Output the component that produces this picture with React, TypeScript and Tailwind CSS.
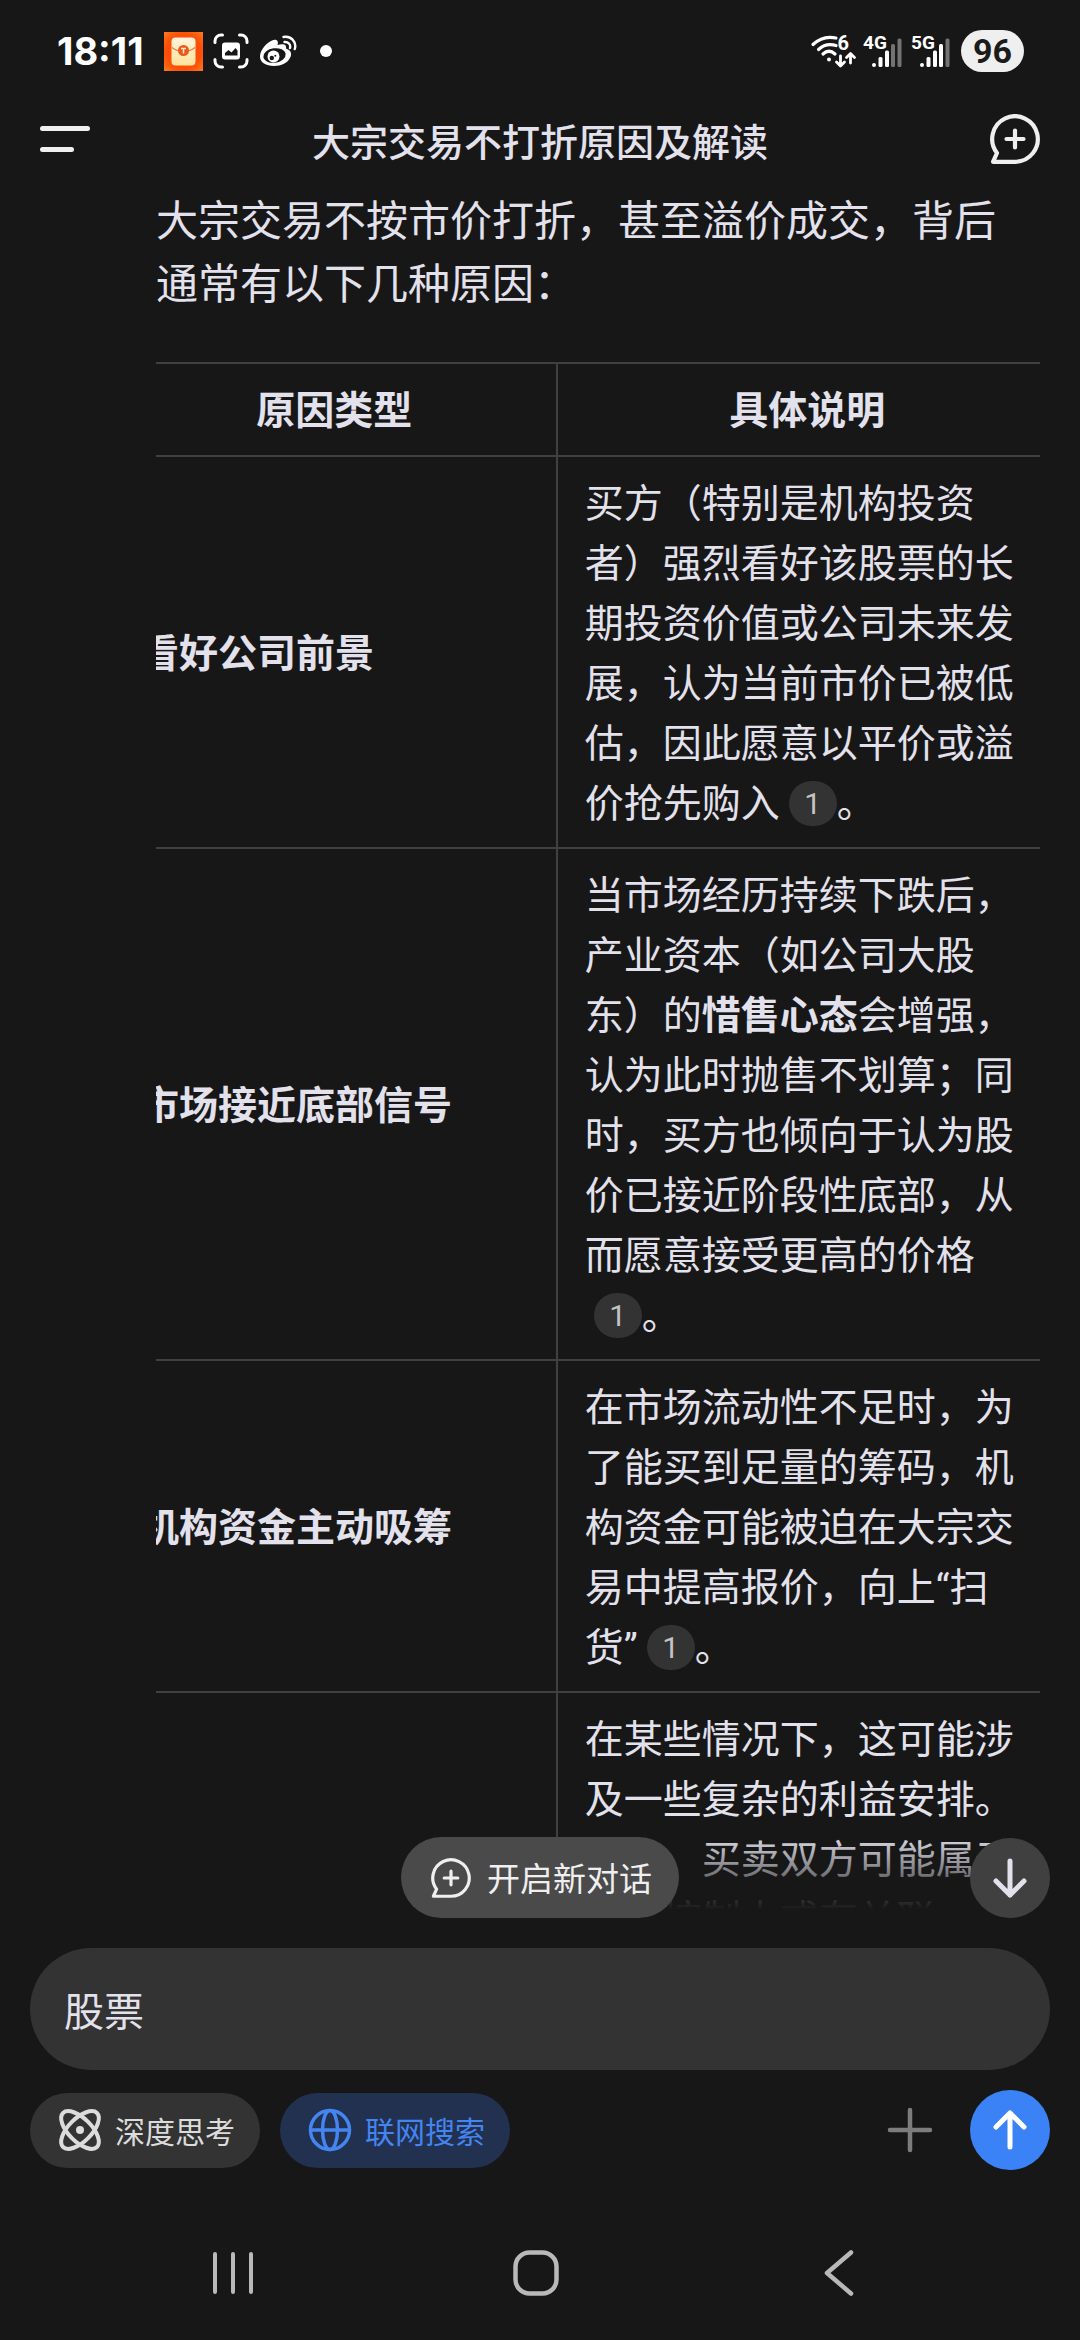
import type { ReactNode } from "react";

function Cite() {
  return (
    <button type="button" className="ml-[9px] inline-flex h-[45px] w-12 items-center justify-center rounded-full bg-[#333333] align-[3px] text-[30px] leading-[45px] text-[#c4c4c4]">
      1
    </button>
  );
}

function CiteEnd() {
  return (
    <span className="whitespace-nowrap">
      <Cite />。
    </span>
  );
}

const rows: { title: string; body: ReactNode }[] = [
  {
    title: "看好公司前景",
    body: (
      <>
        买方（特别是机构投资者）强烈看好该股票的长期投资价值或公司未来发展，认为当前市价已被低估，因此愿意以平价或溢价抢先购入
        <CiteEnd />
      </>
    ),
  },
  {
    title: "市场接近底部信号",
    body: (
      <>
        当市场经历持续下跌后，产业资本（如公司大股东）的<strong className="font-bold">惜售心态</strong>
        会增强，认为此时抛售不划算；同时，买方也倾向于认为股价已接近阶段性底部，从而愿意接受更高的价格
        <CiteEnd />
      </>
    ),
  },
  {
    title: "机构资金主动吸筹",
    body: (
      <>
        在市场流动性不足时，为了能买到足量的筹码，机构资金可能被迫在大宗交易中提高报价，向上“扫货”
        <CiteEnd />
      </>
    ),
  },
  {
    title: "特殊利益安排",
    body: (
      <>
        在某些情况下，这可能涉及一些复杂的利益安排。例如，买卖双方可能属于同一控制人或有关联，
        有意通过大宗交易维持股价，或者完成股份在不同账户之间的转移，此时成交价格并不完全反映市场供求关系
        <CiteEnd />
      </>
    ),
  },
];

function NewChatIcon({ className, stroke }: { className: string; stroke: number }) {
  return (
    <svg viewBox="0 0 50 50" className={className} fill="none" stroke="currentColor" strokeWidth={stroke} strokeLinecap="round" strokeLinejoin="round" aria-hidden="true">
      <path d="M25 47.800 H3 L7 39 A22.800 22.800 0 1 1 25 47.800 Z" />
      <path d="M25 16.500 V33.500 M16.500 25 H33.500" />
    </svg>
  );
}

function EnvelopeIcon() {
  return (
    <svg viewBox="0 0 39 39" className="h-[39px] w-[39px]" aria-hidden="true">
      <defs>
        <radialGradient id="env-bg" cx="50%" cy="50%" r="75%">
          <stop offset="0" stopColor="#ff3d00" />
          <stop offset="0.6" stopColor="#fb5008" />
          <stop offset="1" stopColor="#ff8420" />
        </radialGradient>
        <linearGradient id="env-fg" x1="0" y1="0" x2="0" y2="1">
          <stop offset="0" stopColor="#fff3dc" />
          <stop offset="1" stopColor="#ffe39a" />
        </linearGradient>
      </defs>
      <rect width="39" height="39" fill="url(#env-bg)" />
      <rect x="7.500" y="5.500" width="24" height="28" rx="4" fill="url(#env-fg)" />
      <path d="M8 15.500 Q13 19.500 19.500 19.500 Q26 19.500 31 15.500" fill="none" stroke="#f0743a" strokeWidth="1.200" />
      <circle cx="19.500" cy="18.500" r="5.500" fill="#e8591b" />
      <path d="M17 16.500 H22 M19.500 16.500 V21.500" stroke="#ffe9c8" strokeWidth="1.500" fill="none" />
    </svg>
  );
}

function CaptureIcon() {
  return (
    <svg viewBox="0 0 36 36" className="h-9 w-9" fill="none" stroke="white" strokeWidth="3" strokeLinecap="round" aria-hidden="true">
      <path d="M9.500 2 H8 A6 6 0 0 0 2 8 V9.500 M26.500 2 H28 A6 6 0 0 1 34 8 V9.500 M9.500 34 H8 A6 6 0 0 1 2 28 V26.500 M26.500 34 H28 A6 6 0 0 0 34 28 V26.500" />
      <rect x="9" y="9.500" width="18" height="17" rx="3" fill="white" stroke="none" />
      <path d="M12 22.500 V20 L15.500 17 L18.500 19.500 L22.500 15 L24.500 17.500 V22.500 Z" fill="#171717" stroke="none" />
    </svg>
  );
}

function WeiboIcon() {
  return (
    <svg viewBox="0 0 38 32" className="h-8 w-[38px]" aria-hidden="true">
      <path d="M13 5.500 C17.500 3.500 20 6 18.500 10 C23 8.500 28 8.500 27 13.500 C31.500 15 33 18 31.500 22 C29 28 22 31 15 31 C7 31 1 27.500 1 21.500 C1 15.500 7 8 13 5.500 Z" fill="white" />
      <ellipse cx="15.500" cy="20.500" rx="11.200" ry="7.200" transform="rotate(-8 15.500 20.500)" fill="#171717" />
      <circle cx="14.500" cy="21.500" r="6" fill="white" />
      <circle cx="12.800" cy="23" r="2.200" fill="#171717" />
      <circle cx="16.300" cy="20.700" r="1" fill="#171717" />
      <path d="M24.500 2 C31.500 0.500 38 6.500 35.800 14 M25.500 7 C29 6.500 32 9.500 31 13" fill="none" stroke="white" strokeWidth="2.400" strokeLinecap="round" />
    </svg>
  );
}

function WifiIcon() {
  return (
    <svg viewBox="0 0 46 34" className="h-[34px] w-[46px] overflow-visible" fill="none" stroke="white" strokeWidth="3.200" strokeLinecap="round" strokeLinejoin="round" aria-hidden="true">
      <path d="M2 10.500 Q12 1 25 4 M7.500 15.500 Q15 8.500 25 11.500 M12 20 Q18 14.500 24 20" />
      <circle cx="18" cy="25.500" r="2" fill="white" stroke="none" />
      <path d="M29.500 22 V31.500 M25.500 28 L29.500 32 L33.500 28 M39.500 29 V20 M35.500 23.500 L39.500 19.500 L43.500 23.500" strokeWidth="2.800" />
      <text x="26.500" y="16" fill="white" stroke="none" fontSize="20" fontWeight="700" fontFamily="Roboto, sans-serif">
        6
      </text>
    </svg>
  );
}

function SignalIcon({ label, strong }: { label: string; strong: boolean }) {
  return (
    <svg viewBox="0 0 40 34" className="h-[34px] w-10 overflow-visible" aria-hidden="true">
      <text x="0" y="15" fill="white" fontSize="19" fontWeight="700" fontFamily="Roboto, sans-serif">
        {label}
      </text>
      <rect x="9" y="29" width="4" height="4" rx="2" fill="white" />
      <rect x="15.500" y="23" width="4" height="10" rx="1.500" fill="white" />
      <rect x="22" y="16.500" width="4" height="16.500" rx="1.500" fill="white" />
      <rect x="28" y="10" width="4" height="23" rx="1.500" fill={strong ? "white" : "#737373"} />
      <rect x="34.500" y="4.500" width="4" height="28.500" rx="1.500" fill="#737373" />
    </svg>
  );
}

function StatusBar() {
  return (
    <div className="flex h-[102px] shrink-0 items-center justify-between pr-[56px] pl-[57px]">
      <div className="flex items-center">
        <span className="w-[107px] font-[Inter,sans-serif] text-[38px] leading-[50px] font-bold text-white">18:11</span>
        <EnvelopeIcon />
        <div className="ml-[10px] flex items-center gap-[10px]">
          <CaptureIcon />
          <WeiboIcon />
        </div>
        <span className="ml-[23px] h-3 w-3 rounded-full bg-white" />
      </div>
      <div className="flex items-center">
        <WifiIcon />
        <div className="ml-[6px] flex gap-2">
          <SignalIcon label="4G" strong={false} />
          <SignalIcon label="5G" strong />
        </div>
        <span className="ml-[10px] flex h-[42px] w-[63px] items-center justify-center rounded-full bg-[#efefef] text-[34px] leading-[42px] font-bold text-[#1b1b1b]">96</span>
      </div>
    </div>
  );
}

export default function App() {
  return (
    <div className="flex h-screen w-full flex-col overflow-hidden bg-[#171717] font-[Roboto,'Noto_Sans_CJK_SC',sans-serif] text-[#e2e1ec]">
      <StatusBar />

      <header className="flex h-[74px] shrink-0 items-center justify-between px-10">
        <button type="button" aria-label="菜单" className="flex w-[50px] flex-col items-start gap-4">
          <span className="h-[5px] w-[50px] rounded-full bg-[#efefef]" />
          <span className="h-[5px] w-[34px] rounded-full bg-[#efefef]" />
        </button>
        <h1 className="pt-2 text-[38px] leading-[60px] font-medium">大宗交易不打折原因及解读</h1>
        <button type="button" aria-label="新对话" className="text-[#efefef]">
          <NewChatIcon className="h-[50px] w-[50px]" stroke={4.2} />
        </button>
      </header>

      <main className="relative min-h-0 flex-1">
        <div className="h-full overflow-hidden pt-[14px] pr-10 pl-[156px]">
          <p className="pr-5 text-[42px] leading-[63px]">大宗交易不按市价打折，甚至溢价成交，背后通常有以下几种原因：</p>
          <div className="mt-[46px] overflow-hidden">
            <table className="-ml-[43px] w-[calc(100%+60px)] table-fixed border-collapse text-[39px] leading-[60px]">
              <colgroup>
                <col className="w-[47%]" />
                <col />
              </colgroup>
              <thead>
                <tr className="border-y-2 border-[#404040]">
                  <th className="border-r-2 border-[#404040] px-[27px] pt-[17px] pb-[14px] text-center font-bold">原因类型</th>
                  <th className="px-[27px] pt-[17px] pb-[14px] text-center font-bold">具体说明</th>
                </tr>
              </thead>
              <tbody>
                {rows.map((row) => (
                  <tr key={row.title} className="border-b-2 border-[#404040]">
                    <td className="border-r-2 border-[#404040] px-[27px] pt-[17px] pb-[13px] font-bold">{row.title}</td>
                    <td className="px-[27px] pt-[17px] pb-[13px]">{row.body}</td>
                  </tr>
                ))}
              </tbody>
            </table>
          </div>
        </div>
        <div className="pointer-events-none absolute inset-x-0 bottom-0 h-[84px] bg-linear-to-t from-[#171717] from-10% to-transparent" />
        <button type="button" className="absolute bottom-0 left-1/2 flex h-[81px] -translate-x-1/2 items-center gap-4 rounded-full bg-[#4a4a4a] pr-[27px] pl-[30px] text-[#efefef]">
          <NewChatIcon className="h-10 w-10" stroke={4} />
          <span className="pt-1 text-[33px] leading-[48px]">开启新对话</span>
        </button>
        <button type="button" aria-label="滚动到底部" className="absolute right-[30px] bottom-0 flex h-20 w-20 items-center justify-center rounded-full bg-[#404040]">
          <svg viewBox="0 0 40 40" className="h-10 w-10" fill="none" stroke="currentColor" strokeWidth="5" strokeLinecap="round" strokeLinejoin="round" aria-hidden="true">
            <path d="M20 3 V37 M6 23 L20 37 L34 23" />
          </svg>
        </button>
      </main>

      <footer className="shrink-0 px-[30px] pt-[30px]">
        <input type="text" aria-label="消息" defaultValue="股票" className="block h-[122px] w-full rounded-full bg-[#333333] px-[34px] text-[40px] leading-[60px] outline-none" />
        <div className="mt-5 flex h-20 items-center">
          <button type="button" className="flex h-[75px] items-center gap-[11px] rounded-full bg-[#333333] pr-[25px] pl-[26px] text-[#dcdcdc]">
            <svg viewBox="0 0 48 48" className="h-12 w-12" fill="none" stroke="currentColor" strokeWidth="4" aria-hidden="true">
              <ellipse cx="24" cy="24" rx="24" ry="11.500" transform="rotate(45 24 24)" />
              <ellipse cx="24" cy="24" rx="24" ry="11.500" transform="rotate(-45 24 24)" />
              <circle cx="24" cy="24" r="4" fill="currentColor" stroke="none" />
            </svg>
            <span className="pt-1 text-[30px] leading-[45px]">深度思考</span>
          </button>
          <button type="button" aria-pressed="true" className="ml-5 flex h-[75px] items-center gap-[11px] rounded-full bg-[#21314f] pr-[25px] pl-[26px] text-[#4485f1]">
            <svg viewBox="0 0 48 48" className="h-12 w-12" fill="none" stroke="currentColor" strokeWidth="3.500" aria-hidden="true">
              <circle cx="24" cy="24" r="19.500" />
              <ellipse cx="24" cy="24" rx="7.500" ry="19.500" />
              <path d="M4.500 24 H43.500" />
            </svg>
            <span className="pt-1 text-[30px] leading-[45px]">联网搜索</span>
          </button>
          <button type="button" aria-label="添加附件" className="ml-auto text-[#7d7d7d]">
            <svg viewBox="0 0 46 46" className="h-[46px] w-[46px]" fill="none" stroke="currentColor" strokeWidth="4.500" strokeLinecap="round" aria-hidden="true">
              <path d="M23 3 V43 M3 23 H43" />
            </svg>
          </button>
          <button type="button" aria-label="发送" className="ml-[37px] flex h-20 w-20 items-center justify-center rounded-full bg-[#3b82f6] text-white">
            <svg viewBox="0 0 40 40" className="h-10 w-10" fill="none" stroke="currentColor" strokeWidth="5" strokeLinecap="round" strokeLinejoin="round" aria-hidden="true">
              <path d="M20 37 V3 M6 17 L20 3 L34 17" />
            </svg>
          </button>
        </div>
      </footer>

      <nav className="mt-[36px] flex h-[134px] shrink-0 items-center justify-around pr-[90px] pl-[81px] text-[#b9b9b9]">
        <button type="button" aria-label="最近任务">
          <svg viewBox="0 0 48 48" className="h-12 w-12" fill="none" stroke="currentColor" strokeWidth="4" strokeLinecap="round" aria-hidden="true">
            <path d="M6 5 V43 M24 5 V43 M42 5 V43" />
          </svg>
        </button>
        <button type="button" aria-label="主屏幕">
          <svg viewBox="0 0 48 48" className="h-12 w-12" fill="none" stroke="currentColor" strokeWidth="4.500" aria-hidden="true">
            <rect x="3.500" y="3.500" width="41" height="41" rx="14" />
          </svg>
        </button>
        <button type="button" aria-label="返回">
          <svg viewBox="0 0 48 48" className="h-12 w-12" fill="none" stroke="currentColor" strokeWidth="4.500" strokeLinecap="round" strokeLinejoin="round" aria-hidden="true">
            <path d="M36 3.500 L12 24 L36 44.500" />
          </svg>
        </button>
      </nav>
    </div>
  );
}
